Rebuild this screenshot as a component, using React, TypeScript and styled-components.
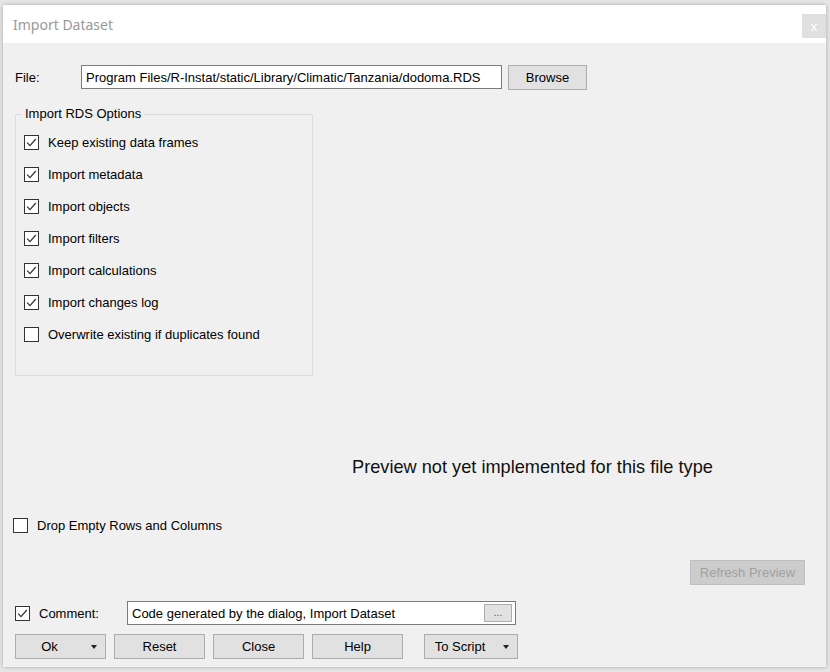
import React from 'react';
import styled, { createGlobalStyle } from 'styled-components';

const GlobalStyle = createGlobalStyle`
    html, body {
        margin: 0;
        padding: 0;
        background: #e6e6e6;
        font-family: "Liberation Sans", Arial, sans-serif;
        font-size: 13px;
        color: #000;
    }
`;

const Page = styled.div`
    width: 830px;
    height: 672px;
    overflow: hidden;
    padding: 5px 4px 0 3px;
    box-sizing: border-box;
`;

const Window = styled.div`
    width: 823px;
    height: 662px;
    display: flex;
    flex-direction: column;
    background: #f0f0f0;
    box-shadow: 0 0 4px rgba(0, 0, 0, 0.28);
`;

const TitleBar = styled.div`
    height: 38px;
    flex-shrink: 0;
    background: #fff;
    display: flex;
    align-items: flex-start;
    justify-content: space-between;
    span {
        margin: 10px 0 0 10px;
        font-family: "Noto Sans", "Open Sans", sans-serif;
        font-size: 14px;
        color: #9a9a9a;
    }
`;

const CloseButton = styled.div`
    margin-top: 9px;
    width: 24px;
    height: 24px;
    background: #e0e0e0;
    color: #fff;
    font-family: "Noto Sans", sans-serif;
    font-size: 13px;
    display: flex;
    align-items: center;
    justify-content: center;
`;

const Body = styled.div`
    flex: 1;
    display: flex;
    flex-direction: column;
`;

const FileRow = styled.div`
    margin: 22px 0 0 12px;
    height: 24px;
    display: flex;
    align-items: center;
    gap: 6px;
    label {
        width: 60px;
    }
`;

const TextBox = styled.div<{ $width: number }>`
    width: ${({ $width }) => $width}px;
    height: 24px;
    box-sizing: border-box;
    border: 1px solid #7a7a7a;
    background: #fff;
    display: flex;
    align-items: center;
    padding: 0 3px 0 4px;
    overflow: hidden;
    white-space: nowrap;
`;

const TextValue = styled.span`
    flex: 1;
    overflow: hidden;
`;

const Button = styled.div<{ $width: number; $disabled?: boolean }>`
    width: ${({ $width }) => $width}px;
    height: 25px;
    box-sizing: border-box;
    background: ${({ $disabled }) => ($disabled ? '#cccccc' : '#e1e1e1')};
    border: 1px solid ${({ $disabled }) => ($disabled ? '#bfbfbf' : '#adadad')};
    color: ${({ $disabled }) => ($disabled ? '#a0a0a0' : '#000')};
    display: flex;
    align-items: center;
    justify-content: center;
    flex-shrink: 0;
`;

const SplitLabel = styled.span`
    flex: 1;
    text-align: center;
`;

const ArrowArea = styled.span`
    width: 22px;
    display: flex;
    justify-content: center;
    &::after {
        content: '';
        border-left: 3.5px solid transparent;
        border-right: 3.5px solid transparent;
        border-top: 4px solid #222;
    }
`;

const Group = styled.fieldset`
    margin: 17px 0 0 12px;
    width: 298px;
    height: 270px;
    box-sizing: border-box;
    border: 1px solid #dcdcdc;
    padding: 4px 0 0 8px;
    legend {
        margin-left: -2px;
        padding: 0 3px;
        line-height: 16px;
    }
`;

const OptionList = styled.div`
    display: flex;
    flex-direction: column;
`;

const CheckRow = styled.div<{ $height?: number; $left?: number; $top?: number }>`
    height: ${({ $height }) => $height || 32}px;
    display: flex;
    align-items: center;
    margin-left: ${({ $left }) => $left || 0}px;
    margin-top: ${({ $top }) => $top || 0}px;
    white-space: nowrap;
`;

const Box = styled.span`
    width: 15px;
    height: 15px;
    box-sizing: border-box;
    border: 1px solid #333;
    background: #fff;
    margin-right: 9px;
    flex-shrink: 0;
    display: flex;
    svg {
        display: block;
    }
`;

const Preview = styled.div`
    margin: 81px 0 0 349px;
    height: 20px;
    line-height: 20px;
    font-size: 18.2px;
    color: #111;
`;

const RefreshRow = styled.div`
    margin: 27px 21px 0 0;
    display: flex;
    justify-content: flex-end;
`;

const CommentRow = styled.div`
    margin: 16px 0 0 12px;
    height: 24px;
    display: flex;
    align-items: center;
`;

const CommentCheck = styled.div`
    width: 112px;
    display: flex;
    align-items: center;
`;

const DotsButton = styled.span`
    width: 28px;
    height: 18px;
    box-sizing: border-box;
    background: #e1e1e1;
    border: 1px solid #adadad;
    color: #555;
    font-size: 10px;
    display: flex;
    align-items: center;
    justify-content: center;
    line-height: 1;
    flex-shrink: 0;
`;

const ButtonRow = styled.div`
    margin: 9px 0 0 12px;
    display: flex;
    gap: 8px;
`;

const Spacer = styled.span`
    width: 5px;
`;

function Check({ checked }: { checked: boolean }) {
    return (
        <Box>
            {checked && (
                <svg width="13" height="13" viewBox="0 0 13 13">
                    <polyline points="2.2,6.6 5,9.6 10.8,3" fill="none" stroke="#333" strokeWidth="1.3" />
                </svg>
            )}
        </Box>
    );
}

const options = [
    { label: 'Keep existing data frames', checked: true },
    { label: 'Import metadata', checked: true },
    { label: 'Import objects', checked: true },
    { label: 'Import filters', checked: true },
    { label: 'Import calculations', checked: true },
    { label: 'Import changes log', checked: true },
    { label: 'Overwrite existing if duplicates found', checked: false },
];

export default function App() {
    return (
        <>
            <GlobalStyle />
            <Page>
                <Window>
                    <TitleBar>
                        <span>Import Dataset</span>
                        <CloseButton>x</CloseButton>
                    </TitleBar>
                    <Body>
                        <FileRow>
                            <label>File:</label>
                            <TextBox $width={421}>
                                <TextValue>Program Files/R-Instat/static/Library/Climatic/Tanzania/dodoma.RDS</TextValue>
                            </TextBox>
                            <Button $width={79}>Browse</Button>
                        </FileRow>
                        <Group>
                            <legend>Import RDS Options</legend>
                            <OptionList>
                                {options.map((o) => (
                                    <CheckRow key={o.label}>
                                        <Check checked={o.checked} />
                                        <span>{o.label}</span>
                                    </CheckRow>
                                ))}
                            </OptionList>
                        </Group>
                        <Preview>Preview not yet implemented for this file type</Preview>
                        <CheckRow $height={16} $left={10} $top={40}>
                            <Check checked={false} />
                            <span>Drop Empty Rows and Columns</span>
                        </CheckRow>
                        <RefreshRow>
                            <Button $width={115} $disabled>Refresh Preview</Button>
                        </RefreshRow>
                        <CommentRow>
                            <CommentCheck>
                                <Check checked />
                                <span>Comment:</span>
                            </CommentCheck>
                            <TextBox $width={389}>
                                <TextValue>Code generated by the dialog, Import Dataset</TextValue>
                                <DotsButton>...</DotsButton>
                            </TextBox>
                        </CommentRow>
                        <ButtonRow>
                            <Button $width={91}>
                                <SplitLabel>Ok</SplitLabel>
                                <ArrowArea />
                            </Button>
                            <Button $width={91}>Reset</Button>
                            <Button $width={91}>Close</Button>
                            <Button $width={91}>Help</Button>
                            <Spacer />
                            <Button $width={94}>
                                <SplitLabel>To Script</SplitLabel>
                                <ArrowArea />
                            </Button>
                        </ButtonRow>
                    </Body>
                </Window>
            </Page>
        </>
    );
}
